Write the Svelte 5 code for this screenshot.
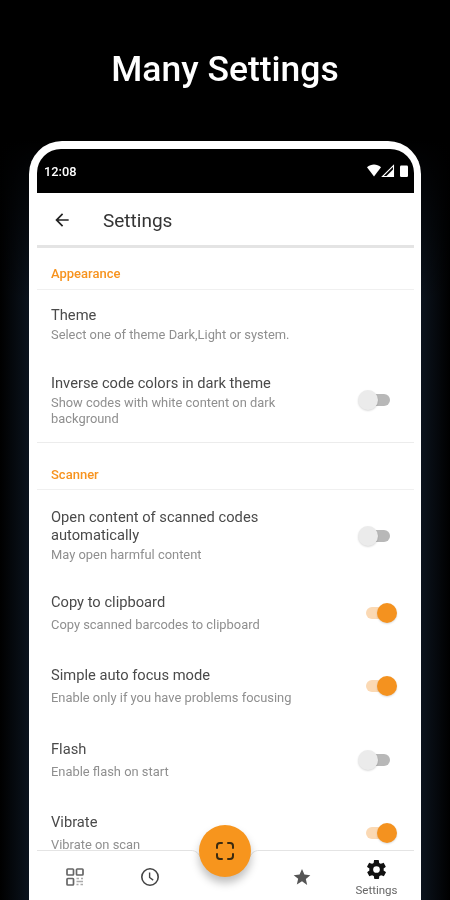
<script>
	const appearance = [
		{ title: 'Theme', sub: 'Select one of theme Dark,Light or system.' },
		{ title: 'Inverse code colors in dark theme', sub: 'Show codes with white content on dark background', toggle: 'off' }
	];
	const scanner = [
		{ title: 'Open content of scanned codes automatically', sub: 'May open harmful content', toggle: 'off', kind: 'wrap' },
		{ title: 'Copy to clipboard', sub: 'Copy scanned barcodes to clipboard', toggle: 'on', kind: 'roomy' },
		{ title: 'Simple auto focus mode', sub: 'Enable only if you have problems focusing', toggle: 'on', kind: 'roomy' },
		{ title: 'Flash', sub: 'Enable flash on start', toggle: 'off', kind: 'roomy' },
		{ title: 'Vibrate', sub: 'Vibrate on scan', toggle: 'on', kind: 'roomy' }
	];
	const sections = [
		{ name: 'Appearance', rows: appearance },
		{ name: 'Scanner', rows: scanner }
	];
</script>

<div class="page">
	<h1>Many Settings</h1>
	<div class="phone">
		<div class="screen">
			<div class="status">
				<span class="time">12:08</span>
				<svg width="41" height="14" viewBox="0 0 41 14">
					<path d="M0 3.200C2 1.500 4.600.6 7 .6s5 .9 7 2.600L7 12.500z" fill="#fff" />
					<path d="M26.500 1.500v11H15.500z" fill="none" stroke="#fff" stroke-width="1.100" />
					<path d="M26.500 5v7.500H19z" fill="#fff" />
					<rect x="33" y="1.500" width="8" height="11.500" rx="1.200" fill="#fff" />
				</svg>
			</div>
			<div class="toolbar">
				<svg width="20" height="20" viewBox="0 0 24 24">
					<path d="M20 11H7.800l5.600-5.600L12 4l-8 8 8 8 1.400-1.400L7.800 13H20z" fill="#222" />
				</svg>
				<span>Settings</span>
			</div>
			<div class="list">
				{#each sections as section, i}
					<div class="head" class:second={i === 1}>{section.name}</div>
					{#each section.rows as row}
						<div class="row {row.kind ?? ''}">
							<div class="text">
								<div class="title">{row.title}</div>
								<div class="sub">{row.sub}</div>
							</div>
							{#if row.toggle}
								<div class="switch {row.toggle}"><i></i></div>
							{/if}
						</div>
					{/each}
				{/each}
			</div>
			<div class="nav">
				<svg class="notch" width="90" height="16" viewBox="0 0 90 16">
					<path d="M0 1h12c6 0 8 3 10 8h46c2-5 4-8 10-8h12v-2H0z" fill="#fff" />
					<path d="M0 .5h11c5 0 8 3 10 8M90 .5H79c-5 0-8 3-10 8" fill="none" stroke="#e2e2e2" stroke-width="1" />
				</svg>
				<button class="fab" aria-label="Scan">
					<svg width="22" height="22" viewBox="0 0 22 22" fill="none" stroke="#3a2a10" stroke-width="2" stroke-linecap="round">
						<path d="M3 8V6a3 3 0 0 1 3-3h2M14 3h2a3 3 0 0 1 3 3v2M19 14v2a3 3 0 0 1-3 3h-2M8 19H6a3 3 0 0 1-3-3v-2" />
					</svg>
				</button>
				<div class="tab">
					<svg width="20" height="20" viewBox="0 0 20 20" fill="none" stroke="#666" stroke-width="1.700">
						<rect x="2" y="2" width="6.500" height="6" rx=".8" />
						<rect x="11.500" y="2" width="6.500" height="6" rx=".8" />
						<rect x="2" y="11.500" width="6.500" height="6.500" rx=".8" />
						<path d="M11.500 11.500h2.500M16 11.500h2M11.500 14.500h6.500M11.500 17.500h2M15.500 17.500h2.500" stroke="#aaa" />
					</svg>
				</div>
				<div class="tab">
					<svg width="20" height="20" viewBox="0 0 20 20" fill="none" stroke="#444" stroke-width="1.600">
						<circle cx="10" cy="10" r="8.200" />
						<path d="M9.600 5.500v5l3.600 2.600" stroke-width="1.400" />
					</svg>
				</div>
				<div class="tab"></div>
				<div class="tab star">
					<svg width="20" height="20" viewBox="0 0 24 24">
						<path d="M12 2.500l2.900 6.600 7.100.7-5.400 4.700 1.600 7L12 17.100l-6.200 3.900 1.600-7L2 9.800l7.100-.7z" fill="#555" />
					</svg>
				</div>
				<div class="tab active">
					<svg width="23" height="23" viewBox="0 0 24 24">
						<path fill="#111" fill-rule="evenodd" d="M19.400 13c.1-.3.1-.7.1-1s0-.7-.1-1l2.100-1.600c.2-.2.2-.4.1-.6l-2-3.500c-.1-.2-.4-.3-.6-.2l-2.500 1c-.5-.4-1.100-.7-1.700-1l-.4-2.600c0-.3-.2-.4-.5-.4h-4c-.3 0-.5.2-.5.4l-.4 2.600c-.6.3-1.200.6-1.700 1l-2.500-1c-.2-.1-.5 0-.6.2l-2 3.500c-.1.2-.1.5.1.6L4.600 11c-.1.3-.1.7-.1 1s0 .7.1 1l-2.100 1.600c-.2.2-.2.4-.1.6l2 3.500c.1.2.4.3.6.2l2.500-1c.5.4 1.100.7 1.700 1l.4 2.600c0 .3.2.4.5.4h4c.3 0 .5-.2.500-.4l.4-2.600c.6-.3 1.200-.6 1.700-1l2.500 1c.2.1.5 0 .6-.2l2-3.500c.1-.2.1-.5-.1-.6zM12 15.500a3.500 3.500 0 1 1 0-7 3.500 3.500 0 0 1 0 7z" />
					</svg>
					<span>Settings</span>
				</div>
			</div>
		</div>
	</div>
</div>

<style>
	:global(body) {
		margin: 0;
		background: #000;
	}
	.page {
		height: 900px;
		overflow: hidden;
		font-family: Roboto, sans-serif;
		background:
			linear-gradient(180deg, #000 140px, rgba(0, 0, 0, 0) 300px),
			linear-gradient(90deg, #000 0, #0b131d 29px, #0b131d 421px, #000 450px);
		filter: blur(0.45px);
	}
	h1 {
		margin: 0;
		padding-top: 48px;
		height: 141px;
		box-sizing: border-box;
		color: #fff;
		font-size: 35.500px;
		font-weight: 500;
		line-height: 42px;
		text-align: center;
	}
	.phone {
		margin: 0 29px;
		padding: 8px 7px 0 8px;
		height: 759px;
		box-sizing: border-box;
		background: #fff;
		border-radius: 33px 33px 0 0;
	}
	.screen {
		height: 751px;
		display: flex;
		flex-direction: column;
	}
	.status {
		height: 44px;
		flex: none;
		display: flex;
		align-items: center;
		justify-content: space-between;
		padding: 0 6px 0 7px;
		background: #000;
		border-radius: 24px 24px 0 0;
		color: #fff;
	}
	.time {
		font-size: 12.800px;
		font-weight: 500;
		margin-top: 1px;
	}
	.toolbar {
		height: 50px;
		padding-top: 2px;
		padding-left: 15px;
		flex: none;
		display: flex;
		align-items: center;
		gap: 31px;
		border-bottom: 3px solid #e4e4e4;
		color: #333;
		font-size: 19px;
	}
	.list {
		flex: 1;
		min-height: 0;
	}
	.head {
		height: 42px;
		line-height: 51px;
		box-sizing: border-box;
		padding-left: 14px;
		border-bottom: 1px solid #f0f0f0;
		color: #f7931e;
		font-size: 13px;
		font-weight: 500;
	}
	.head.second {
		height: 48px;
		line-height: 64px;
		border-top: 1px solid #ececec;
	}
	.row {
		display: flex;
		align-items: center;
		padding: 15.500px 24px 15.500px 14px;
	}
	.row.wrap {
		padding-top: 19px;
		padding-bottom: 13px;
	}
	.row.wrap .title {
		line-height: 17.500px;
	}
	.row.roomy {
		padding-top: 16.750px;
		padding-bottom: 16.750px;
	}
	.row.roomy .sub {
		margin-top: 6px;
	}
	.text {
		flex: 1;
		min-width: 0;
	}
	.title {
		color: #4a4a4a;
		font-size: 14.700px;
		line-height: 18px;
	}
	.sub {
		margin-top: 3px;
		color: #8f8f8f;
		font-size: 12.900px;
		line-height: 16px;
	}
	.switch {
		flex: none;
		width: 30px;
		height: 12px;
		margin-left: 30px;
		border-radius: 6px;
		position: relative;
	}
	.switch i {
		position: absolute;
		top: -4px;
		width: 20px;
		height: 20px;
		border-radius: 50%;
		box-shadow: 0 1px 2px rgba(0, 0, 0, 0.15);
	}
	.switch.off {
		background: #b8b8b8;
	}
	.switch.off i {
		left: -2px;
		background: #ebebeb;
	}
	.switch.on {
		width: 26px;
		margin-right: -2px;
		background: #fbd9b4;
	}
	.switch.on i {
		right: -5px;
		background: #f4921f;
	}
	.nav {
		flex: none;
		height: 49px;
		display: flex;
		border-top: 1px solid #e4e4e4;
		background: #fff;
		position: relative;
	}
	.notch {
		position: absolute;
		left: 143px;
		top: -1px;
	}
	.fab {
		position: absolute;
		left: 162px;
		top: -26px;
		width: 52px;
		height: 52px;
		padding: 0;
		border: 0;
		border-radius: 50%;
		background: #f7951d;
		box-shadow: 0 6px 9px rgba(0, 0, 0, 0.25);
		display: flex;
		align-items: center;
		justify-content: center;
	}
	.tab {
		width: 75px;
		display: flex;
		flex-direction: column;
		align-items: center;
		padding-top: 16px;
	}
	.tab.star {
		padding-left: 2px;
		margin-right: -2px;
	}
	.tab.active {
		padding-top: 7px;
		padding-left: 2px;
		color: #666;
		font-size: 11.500px;
		line-height: 12px;
	}
	.tab.active span {
		margin-top: 3px;
	}
	.tab svg {
		flex: none;
	}
</style>
